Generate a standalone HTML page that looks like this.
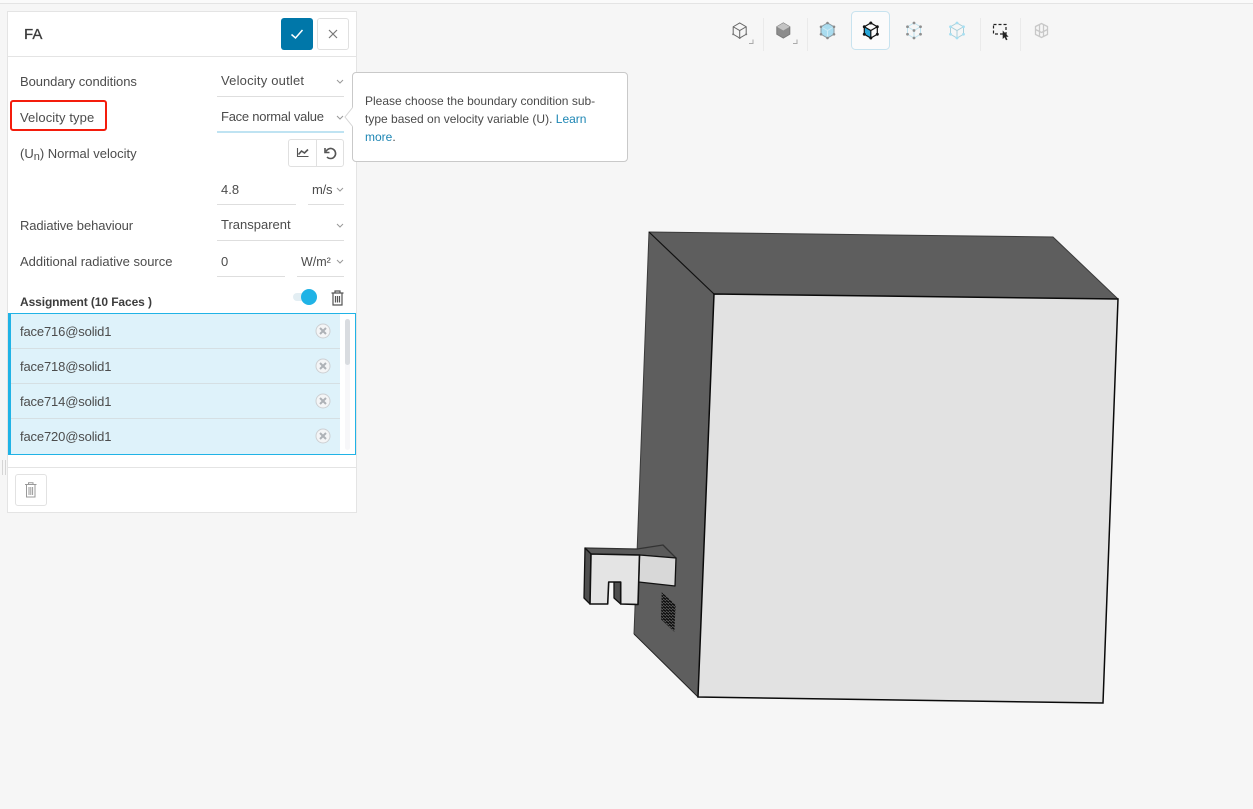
<!DOCTYPE html>
<html><head><meta charset="utf-8"><style>
html,body{margin:0;padding:0;width:1253px;height:809px;overflow:hidden;background:#f6f6f6;font-family:"Liberation Sans",sans-serif;color:#4a4a4a}
.a{position:absolute}
.t{position:absolute;font-size:13px;line-height:16px;white-space:nowrap;color:#4c4c4c}
.l{position:absolute;height:1px;background:#dedede}
</style></head><body>
<div class="a" style="left:0;top:0;width:1253px;height:809px;background:#f6f6f6"></div>
<div class="a" style="left:0;top:0;width:1253px;height:3px;background:#fafafa"></div>
<div class="a" style="left:0;top:3px;width:1253px;height:1px;background:#e4e4e4"></div>

<svg class="a" style="left:0;top:0" width="1253" height="809" viewBox="0 0 1253 809">
<defs><pattern id="h" width="3" height="3" patternUnits="userSpaceOnUse"><rect width="3" height="3" fill="#555"/><path d="M0 0.500L3 2.500" stroke="#0a0a0a" stroke-width="1.500"/></pattern></defs>
<polygon points="649,232 1053,237 1118,299 714,294" fill="#5e5e5e"/>
<polygon points="649,232 714,294 698,697 634,634" fill="#5e5e5e"/>
<polygon points="714,294 1118,299 1103,703 698,697" fill="#e2e2e2"/>
<path d="M634,634 L649,232 L1053,237 L1118,299" fill="none" stroke="#3a3a3a" stroke-width="1"/>
<path d="M634,634 L698,697" fill="none" stroke="#222" stroke-width="1"/>
<path d="M649,232 L714,294" fill="none" stroke="#111" stroke-width="1.200"/>
<polygon points="714,294 1118,299 1103,703 698,697" fill="none" stroke="#0a0a0a" stroke-width="1.500"/>
<g stroke="#111" stroke-width="1.300" stroke-linejoin="round">
<polygon points="585,548 637,549 663,545 676,558 639.500,555 591,554" fill="#5a5a5a" stroke="#333"/>
<polygon points="585,548 591,554 590,604 584,598" fill="#4f4f4f"/>
<polygon points="639.500,555 676,558 675,586 638.700,582" fill="#d8d8d8"/>
<polygon points="614,582 620.700,582 620.700,604 614,598" fill="#4f4f4f"/>
<polygon points="591,554 639.500,555 638,604.500 620.700,604 620.700,582 608.700,582 607.700,604 590,604" fill="#e4e4e4" stroke-width="1.600"/>
</g>
<polygon points="661.700,592.300 675.700,605 674.300,631.700 661,619.300" fill="url(#h)"/>
</svg>

<!-- toolbar -->
<svg class="a" style="left:720px;top:5px" width="340" height="50" viewBox="0 0 340 50">
<defs><path id="hex" d="M-6.500-3.750L0-7.500 6.500-3.750V3.750L0 7.500-6.500 3.750ZM-6.500-3.750L0 0 6.500-3.750M0 0V7.500"/></defs>
<g stroke="#eaeaea"><path d="M43.500 13V46M87.500 13V46M260.500 13V46M300.500 13V46"/></g>
<rect x="131.500" y="6.500" width="38" height="38" rx="4" fill="#fbfbfb" stroke="#c8e3ef"/>
<g transform="translate(19.700,25.500)"><use href="#hex" fill="none" stroke="#666"/><g fill="#777"><circle cx="-6.500" cy="3.750" r="1"/><circle cx="6.500" cy="3.750" r="1"/><circle cx="0" cy="7.500" r="1"/></g></g>
<path d="M29 38.500h4v-4M73 38.500h4v-4" fill="none" stroke="#aaa"/>
<g transform="translate(63.300,25.500)"><path d="M-6.500-3.750L0-7.500 6.500-3.750V3.750L0 7.500-6.500 3.750Z" fill="#8c8c8c" stroke="#7a7a7a"/><path d="M-6.500-3.750L0 0 6.500-3.750 0-7.500Z" fill="#c4c4c4"/></g>
<g transform="translate(107.500,25.500)"><path d="M-6.500-3.750L0-7.500 6.500-3.750V3.750L0 7.500-6.500 3.750Z" fill="#a9dcef" stroke="#8a9aa2"/><path d="M-6.500-3.750L0 0 6.500-3.750M0 0V7.500" fill="none" stroke="#cdebf6"/>
<g fill="#8a8a8a"><circle cy="-7.500" r="1.300"/><circle cx="-6.500" cy="-3.750" r="1.300"/><circle cx="6.500" cy="-3.750" r="1.300"/><circle cx="-6.500" cy="3.750" r="1.300"/><circle cx="6.500" cy="3.750" r="1.300"/><circle cy="7.500" r="1.300"/></g></g>
<g transform="translate(150.800,25.500)"><path d="M-6.500-3.750L0 0V7.500L-6.500 3.750Z" fill="#27a6d8"/><use href="#hex" fill="none" stroke="#111" stroke-width="1.200"/>
<g fill="#111"><circle cy="-7.500" r="1.500"/><circle cx="-6.500" cy="-3.750" r="1.500"/><circle cx="6.500" cy="-3.750" r="1.500"/><circle cx="-6.500" cy="3.750" r="1.500"/><circle cx="6.500" cy="3.750" r="1.500"/><circle cy="7.500" r="1.500"/></g></g>
<g transform="translate(194,25.500)"><use href="#hex" fill="none" stroke="#bfe3f0"/>
<g fill="#8f8f8f"><circle cy="-7.500" r="1.400"/><circle cx="-6.500" cy="-3.750" r="1.400"/><circle cx="6.500" cy="-3.750" r="1.400"/><circle cx="-6.500" cy="3.750" r="1.400"/><circle cx="6.500" cy="3.750" r="1.400"/><circle cy="7.500" r="1.400"/><circle r="1.400"/></g></g>
<g transform="translate(237,25.500)"><use href="#hex" fill="none" stroke="#a9cfd9"/>
<g fill="#a6dff2"><circle cy="-7.500" r="1.400"/><circle cx="-6.500" cy="-3.750" r="1.400"/><circle cx="6.500" cy="-3.750" r="1.400"/><circle cx="-6.500" cy="3.750" r="1.400"/><circle cx="6.500" cy="3.750" r="1.400"/><circle cy="7.500" r="1.400"/></g></g>
<rect x="273.500" y="19.500" width="12.500" height="9.500" fill="none" stroke="#222" stroke-width="1.200" stroke-dasharray="3 2"/>
<path d="M282.700 25.500v8.500l1.900-1.700 1.400 3 1.500-.7-1.400-2.900h2.500z" fill="#222"/>
<g fill="none" stroke="#c8c8c8" stroke-width="1.300"><path d="M315.500 21.500l6-3 6 3v8l-6 3-6-3zM315.500 24.500l6 3 6-3M319.500 20v11M323.500 20v11"/></g>
</svg>

<!-- panel -->
<div class="a" style="left:7px;top:11px;width:348px;height:500px;background:#fff;border:1px solid #e4e4e4"></div>
<div class="a" style="left:2px;top:460px;width:2px;height:15px;border-left:1px solid #d5d5d5;border-right:1px solid #d5d5d5"></div>
<div class="t" style="left:24px;top:25px;font-size:15px;line-height:20px;color:#3c3c3c;-webkit-text-stroke:.3px #3c3c3c">FA</div>
<div class="a" style="left:281px;top:18px;width:32px;height:32px;border-radius:3px;background:#0077a9"></div>
<svg class="a" style="left:281px;top:18px" width="32" height="32"><path d="M10.500 16.500l4 3.500 7-8" fill="none" stroke="#fff" stroke-width="1.500"/></svg>
<div class="a" style="left:317px;top:18px;width:30px;height:30px;border-radius:3px;border:1px solid #e0e0e0;background:#fff"></div>
<svg class="a" style="left:317px;top:18px" width="32" height="32"><path d="M12 12l8 8M20 12l-8 8" stroke="#777" stroke-width="1.200"/></svg>
<div class="l" style="left:8px;top:56px;width:348px;background:#e4e4e4"></div>

<div class="t" style="left:20px;top:74px;letter-spacing:-.05px">Boundary conditions</div>
<div class="t" style="left:221px;top:73px;letter-spacing:.2px">Velocity outlet</div>
<div class="l" style="left:217px;top:96px;width:127px"></div>
<div class="a" style="left:10px;top:100px;width:93px;height:27px;border:2px solid #f41c0c;border-radius:3px"></div>
<div class="t" style="left:20px;top:110px;letter-spacing:.1px">Velocity type</div>
<div class="t" style="left:221px;top:109px;letter-spacing:-.25px">Face normal value</div>
<div class="a" style="left:217px;top:131px;width:127px;height:2px;background:#bfe3f2"></div>
<div class="t" style="left:20px;top:146px">(U<span style="font-size:11px;position:relative;top:2px">n</span>) Normal velocity</div>
<div class="a" style="left:288px;top:139px;width:54px;height:26px;border:1px solid #e0e0e0;border-radius:3px;background:#fff"></div>
<div class="a" style="left:316px;top:140px;width:1px;height:26px;background:#e0e0e0"></div>
<svg class="a" style="left:288px;top:139px" width="56" height="28"><path d="M9.500 9v8.500h11" fill="none" stroke="#555" stroke-width="1.100"/><path d="M10.500 15.500l3-3.500 3 2 3.500-3.500" fill="none" stroke="#555" stroke-width="1.600"/><path d="M37 9v4.500h4.500" fill="none" stroke="#555" stroke-width="1.600"/><path d="M38 12.500a5 5 0 1 1 1 5.500" fill="none" stroke="#555" stroke-width="1.600"/></svg>

<div class="t" style="left:221px;top:182px">4.8</div>
<div class="l" style="left:217px;top:204px;width:79px"></div>
<div class="t" style="left:312px;top:182px;letter-spacing:-.2px">m/s</div>
<div class="l" style="left:308px;top:204px;width:36px"></div>
<div class="t" style="left:20px;top:218px;letter-spacing:-.1px">Radiative behaviour</div>
<div class="t" style="left:221px;top:217px">Transparent</div>
<div class="l" style="left:217px;top:240px;width:127px"></div>
<div class="t" style="left:20px;top:254px">Additional radiative source</div>
<div class="t" style="left:221px;top:254px">0</div>
<div class="l" style="left:217px;top:276px;width:68px"></div>
<div class="t" style="left:301px;top:254px;font-size:12.500px">W/m²</div>
<div class="l" style="left:297px;top:276px;width:47px"></div>

<svg class="a" style="left:334px;top:77px" width="12" height="200" fill="none" stroke="#999" stroke-width="1"><path d="M3 3l3 3 3-3M3 39l3 3 3-3M3 111l3 3 3-3M3 147l3 3 3-3M3 183l3 3 3-3"/></svg>

<div class="t" style="left:20px;top:294px;font-weight:bold;font-size:12px;letter-spacing:-.1px;color:#3d3d3d">Assignment (10 Faces )</div>
<div class="a" style="left:293px;top:293px;width:16px;height:8px;border-radius:4px;background:#e3eef3"></div>
<div class="a" style="left:301px;top:289px;width:16px;height:16px;border-radius:50%;background:#20b3e6"></div>
<svg class="a" style="left:331px;top:290px" width="13" height="16" fill="none" stroke="#555" stroke-width="1.200"><path d="M.5 3h12M4 3V1h5v2M2 3v12h9V3M4.500 6v6.500M6.500 6v6.500M8.500 6v6.500"/></svg>

<!-- list -->
<div class="a" style="left:8px;top:313px;width:344px;height:140px;border:1px solid #20b3e6;border-left:3px solid #20b3e6;background:#fff"></div>
<div class="a" style="left:11px;top:314px;width:329px;height:140px;background:#def2fa"></div>
<div class="a" style="left:345px;top:319px;width:5px;height:131px;background:#f7f7f9;border-radius:3px"></div>
<div class="a" style="left:345px;top:319px;width:5px;height:46px;background:#d9dce0;border-radius:3px"></div>
<div class="l" style="left:11px;top:348px;width:329px;background:#d5dfe3"></div>
<div class="l" style="left:11px;top:383px;width:329px;background:#d5dfe3"></div>
<div class="l" style="left:11px;top:418px;width:329px;background:#d5dfe3"></div>
<div class="t" style="left:20px;top:324px;letter-spacing:-.15px">face716@solid1</div>
<div class="t" style="left:20px;top:359px;letter-spacing:-.15px">face718@solid1</div>
<div class="t" style="left:20px;top:394px;letter-spacing:-.15px">face714@solid1</div>
<div class="t" style="left:20px;top:429px;letter-spacing:-.15px">face720@solid1</div>
<svg class="a" style="left:315px;top:323px" width="16" height="121">
<g fill="#f4f5f6" stroke="#cdd0d3"><circle cx="8" cy="8" r="7"/><path d="M5 5l6 6M11 5l-6 6" fill="none" stroke="#aeb2b7" stroke-width="2"/></g>
<g fill="#f4f5f6" stroke="#cdd0d3"><circle cx="8" cy="43" r="7"/><path d="M5 40l6 6M11 40l-6 6" fill="none" stroke="#aeb2b7" stroke-width="2"/></g>
<g fill="#f4f5f6" stroke="#cdd0d3"><circle cx="8" cy="78" r="7"/><path d="M5 75l6 6M11 75l-6 6" fill="none" stroke="#aeb2b7" stroke-width="2"/></g>
<g fill="#f4f5f6" stroke="#cdd0d3"><circle cx="8" cy="113" r="7"/><path d="M5 110l6 6M11 110l-6 6" fill="none" stroke="#aeb2b7" stroke-width="2"/></g>
</svg>
<div class="l" style="left:8px;top:467px;width:348px;background:#e4e4e4"></div>
<div class="a" style="left:15px;top:474px;width:30px;height:30px;border:1px solid #e2e2e2;border-radius:3px;background:#fff"></div>
<svg class="a" style="left:25px;top:482px" width="12" height="16" fill="none" stroke="#999" stroke-width="1"><path d="M0 2.500h11.500M3.500 2.500V.8h4.500v1.700M1.500 2.500v12.500h8.500V2.500M4 5v8M5.800 5v8M7.600 5v8"/></svg>

<!-- tooltip -->
<div class="a" style="left:352px;top:72px;width:274px;height:88px;background:#fff;border:1px solid #c9c9c9;border-radius:4px"></div>
<svg class="a" style="left:344px;top:105px" width="10" height="24"><path d="M9 2L1 12l8 10" fill="#fff" stroke="#d5d5d5"/><rect x="9" y="0" width="1" height="24" fill="#fff"/></svg>
<div class="t" style="left:365px;top:92px;font-size:12px;line-height:18px;color:#4a4a4a;white-space:nowrap">Please choose the boundary condition sub-<br>type based on velocity variable (U). <span style="color:#1d86b4">Learn</span><br><span style="color:#1d86b4">more</span>.</div>
</body></html>
